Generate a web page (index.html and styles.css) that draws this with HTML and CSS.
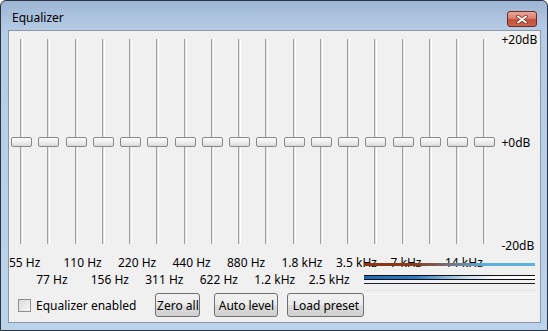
FILE: index.html
```
<!DOCTYPE html>
<html><head><meta charset="UTF-8">
<title>Equalizer</title>
<link rel="stylesheet" href="styles.css">
</head>
<body>
<div class="win">
<div class="title"><span>Equalizer</span>
<div class="close"><svg width="12" height="9" viewBox="0 0 12 9"><path d="M2 1.5L10 7.5M10 1.5L2 7.5" stroke="#7a2418" stroke-width="3.4" stroke-linecap="round"/><path d="M2 1.5L10 7.5M10 1.5L2 7.5" stroke="#fff" stroke-width="2" stroke-linecap="round"/></svg></div>
</div>
<div class="client">
<div class="eq">
<div class="bands">
<div class="band"><div class="trk"></div><div class="thumb"></div></div>
<div class="band"><div class="trk"></div><div class="thumb"></div></div>
<div class="band"><div class="trk"></div><div class="thumb"></div></div>
<div class="band"><div class="trk"></div><div class="thumb"></div></div>
<div class="band"><div class="trk"></div><div class="thumb"></div></div>
<div class="band"><div class="trk"></div><div class="thumb"></div></div>
<div class="band"><div class="trk"></div><div class="thumb"></div></div>
<div class="band"><div class="trk"></div><div class="thumb"></div></div>
<div class="band"><div class="trk"></div><div class="thumb"></div></div>
<div class="band"><div class="trk"></div><div class="thumb"></div></div>
<div class="band"><div class="trk"></div><div class="thumb"></div></div>
<div class="band"><div class="trk"></div><div class="thumb"></div></div>
<div class="band"><div class="trk"></div><div class="thumb"></div></div>
<div class="band"><div class="trk"></div><div class="thumb"></div></div>
<div class="band"><div class="trk"></div><div class="thumb"></div></div>
<div class="band"><div class="trk"></div><div class="thumb"></div></div>
<div class="band"><div class="trk"></div><div class="thumb"></div></div>
<div class="band"><div class="trk"></div><div class="thumb"></div></div>
</div>
<div class="scale"><span>+20dB</span><span>+0dB</span><span>-20dB</span></div>
</div>
<div class="freqs">
<div class="row"><span>55 Hz</span><span>110 Hz</span><span>220 Hz</span><span>440 Hz</span><span>880 Hz</span><span>1.8 kHz</span><span>3.5 kHz</span><span>7 kHz</span><span>14 kHz</span></div>
<div class="row r2"><span>77 Hz</span><span>156 Hz</span><span>311 Hz</span><span>622 Hz</span><span>1.2 kHz</span><span>2.5 kHz</span></div>
<div class="lines">
<div class="ln l1"></div>
<div class="ln l2"></div>
<div class="ln l3"></div>
<div class="ln l4"></div>
<div class="ln l5"></div>
<div class="ln l6"></div>
<div class="ln l7"></div>
</div>
</div>
<div class="ctl">
<label class="chk"><span class="box"></span>Equalizer enabled</label>
<button class="b1">Zero all</button>
<button class="b2">Auto level</button>
<button class="b3">Load preset</button>
</div>
</div>
</div>
</body>
</html>
```
FILE: styles.css
```
body{margin:0;font:12px "Noto Sans","Liberation Sans",sans-serif;color:#000;background:#fff;}
.win{width:548px;height:331px;box-sizing:border-box;border:1px solid #2c3340;border-radius:6px 6px 0 0;background:linear-gradient(to bottom,#9db6d4 0px,#b5cce6 30px,#bcd3ec 100%);display:flex;flex-direction:column;overflow:hidden;}
.title{height:29px;flex-shrink:0;display:flex;padding-left:11px;}
.title span{padding-top:9px;line-height:16px;}
.close{margin:10px 10px 0 auto;width:28px;height:14px;border:1px solid #6e2a22;border-radius:3px;background:linear-gradient(to bottom,#e8a99a 0%,#d8806e 45%,#c4503a 55%,#c9634c 100%);display:flex;align-items:center;justify-content:center;}
.close svg{display:block;}
.client{flex:1;min-height:0;margin:0 6px 7px 7px;border:1px solid #8c98a8;background:#f0f0f0;display:flex;flex-direction:column;}
.eq{display:flex;padding-top:8px;height:205px;}
.bands{display:grid;grid-template-columns:repeat(18,27.25px);height:205px;}
.band{position:relative;}
.trk{position:absolute;left:11px;top:0;bottom:0;width:1px;background:#e2e2e2;border-left:1px solid #a0a0a0;border-right:1px solid #fff;}
.thumb{position:absolute;left:2px;top:98px;width:19px;height:8px;border:1px solid #8a8a8a;border-radius:2px;background:linear-gradient(to bottom,#fbfbfb 0%,#efefef 50%,#d9d9d9 100%);}
.scale{display:flex;flex-direction:column;justify-content:space-between;margin:-7px 0 -10px;height:222px;padding-left:2px;line-height:16px;}
.freqs{position:relative;margin-top:10px;}
.row{display:grid;grid-template-columns:repeat(9,54.5px);line-height:17px;white-space:nowrap;}
.r2{padding-left:27.25px;}
.lines{position:absolute;left:355px;top:0;width:171px;height:60px;}
.ln{position:absolute;left:0;right:0;}
.l1{top:9px;height:3px;background:linear-gradient(to right,#8a3510 0%,#8a3a18 30%,#6f7f95 55%,#5ab2de 72%,#5ab2de 100%);}
.l2{top:21px;height:1px;background:#111;}
.l3{top:22px;height:3px;background:linear-gradient(to right,#1f6cb5 0%,#2a7cc4 30%,#c8dcef 60%,#f4f4ff 75%,#fff 100%);}
.l4{top:25px;height:1px;background:#111;}
.l5{top:29px;height:1px;background:#222;}
.l6{top:36px;height:1px;background:#e2e2e2;}
.l7{top:40px;height:1px;background:#fafafa;}
.ctl{display:flex;align-items:center;margin-top:5px;height:24px;padding-left:9px;}
.chk{display:flex;align-items:center;}
.box{width:11px;height:11px;border:1px solid #8e8f8f;background:linear-gradient(to bottom right,#dcdcdc,#f6f6f6);margin-right:5px;}
button{font:12px "Noto Sans","Liberation Sans",sans-serif;height:24px;padding:0;white-space:nowrap;border:1px solid #707070;border-radius:3px;background:linear-gradient(to bottom,#f2f2f2 0%,#ebebeb 50%,#dddddd 51%,#cfcfcf 100%);color:#000;}
.b1{margin-left:19px;width:45px;}
.b2{margin-left:14px;width:64px;}
.b3{margin-left:9px;width:77px;}
```
